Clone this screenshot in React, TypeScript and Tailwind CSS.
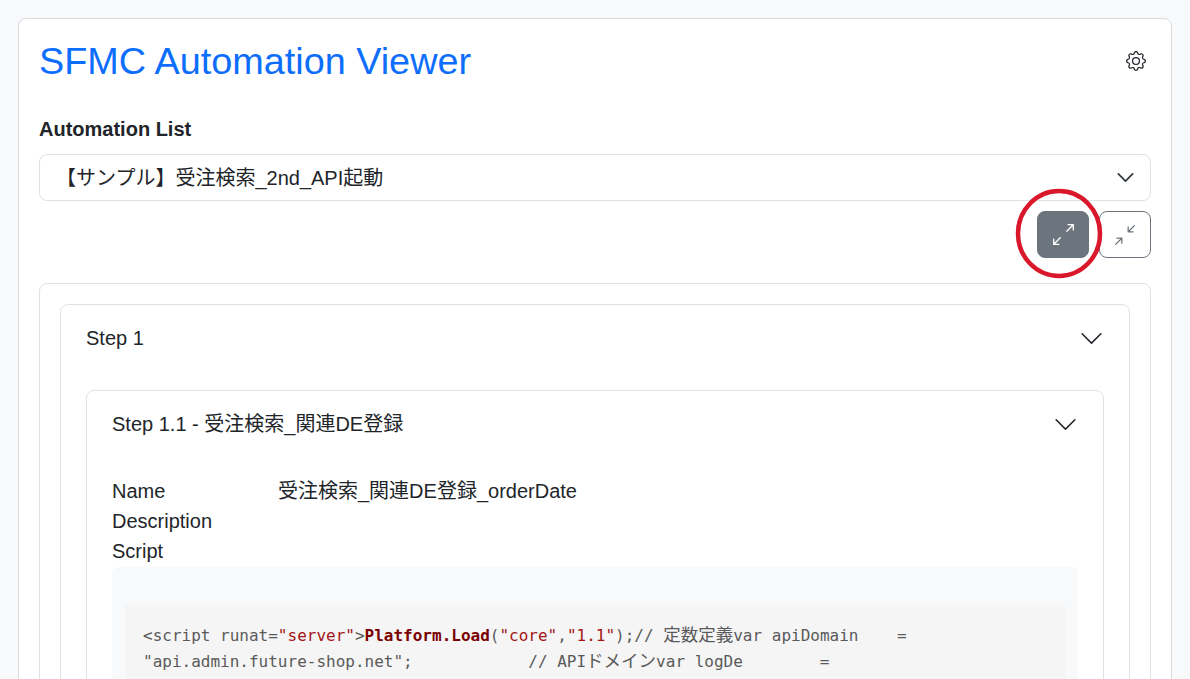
import * as React from 'react'

const Chevron = () => (
  <svg viewBox="0 0 16 16" className="w-[25px] h-[25px] shrink-0" fill="#212529">
    <path fillRule="evenodd" d="M1.646 4.646a.5.5 0 0 1 .708 0L8 10.293l5.646-5.647a.5.5 0 0 1 .708.708l-6 6a.5.5 0 0 1-.708 0l-6-6a.5.5 0 0 1 0-.708z" />
  </svg>
)

const Expand = () => (
  <svg viewBox="0 0 16 16" className="w-[21px] h-[21px]" fill="currentColor">
    <path fillRule="evenodd" d="M5.828 10.172a.5.5 0 0 0-.707 0l-4.096 4.096V11.5a.5.5 0 0 0-1 0v3.975a.5.5 0 0 0 .5.5H4.5a.5.5 0 0 0 0-1H1.732l4.096-4.096a.5.5 0 0 0 0-.707zm4.344-4.344a.5.5 0 0 0 .707 0l4.096-4.096V4.5a.5.5 0 1 0 1 0V.525a.5.5 0 0 0-.5-.5H11.5a.5.5 0 0 0 0 1h2.768l-4.096 4.096a.5.5 0 0 0 0 .707z" />
  </svg>
)

const Contract = () => (
  <svg viewBox="0 0 16 16" className="w-5 h-5" fill="currentColor">
    <path fillRule="evenodd" d="M.172 15.828a.5.5 0 0 0 .707 0l4.096-4.096V14.5a.5.5 0 1 0 1 0v-3.975a.5.5 0 0 0-.5-.5H1.5a.5.5 0 0 0 0 1h2.768L.172 15.121a.5.5 0 0 0 0 .707zM15.828.172a.5.5 0 0 0-.707 0l-4.096 4.096V1.5a.5.5 0 1 0-1 0v3.975a.5.5 0 0 0 .5.5H14.5a.5.5 0 0 0 0-1h-2.768L15.828.879a.5.5 0 0 0 0-.707z" />
  </svg>
)

const Gear = () => (
  <svg viewBox="0 0 16 16" className="w-5 h-5" fill="#212529">
    <path d="M8 4.754a3.246 3.246 0 1 0 0 6.492 3.246 3.246 0 0 0 0-6.492zM5.754 8a2.246 2.246 0 1 1 4.492 0 2.246 2.246 0 0 1-4.492 0z" />
    <path d="M9.796 1.343c-.527-1.79-3.065-1.79-3.592 0l-.094.319a.873.873 0 0 1-1.255.52l-.292-.16c-1.64-.892-3.433.902-2.54 2.541l.159.292a.873.873 0 0 1-.52 1.255l-.319.094c-1.79.527-1.79 3.065 0 3.592l.319.094a.873.873 0 0 1 .52 1.255l-.16.292c-.892 1.64.901 3.434 2.541 2.54l.292-.159a.873.873 0 0 1 1.255.52l.094.319c.527 1.79 3.065 1.79 3.592 0l.094-.319a.873.873 0 0 1 1.255-.52l.292.16c1.64.893 3.434-.902 2.54-2.541l-.159-.292a.873.873 0 0 1 .52-1.255l.319-.094c1.79-.527 1.79-3.065 0-3.592l-.319-.094a.873.873 0 0 1-.52-1.255l.16-.292c.893-1.64-.902-3.433-2.541-2.54l-.292.159a.873.873 0 0 1-1.255-.52l-.094-.319zm-2.633.283c.246-.835 1.428-.835 1.674 0l.094.319a1.873 1.873 0 0 0 2.693 1.115l.291-.16c.764-.415 1.6.42 1.184 1.185l-.159.292a1.873 1.873 0 0 0 1.116 2.692l.318.094c.835.246.835 1.428 0 1.674l-.319.094a1.873 1.873 0 0 0-1.115 2.693l.16.291c.415.764-.42 1.6-1.185 1.184l-.291-.159a1.873 1.873 0 0 0-2.693 1.116l-.094.318c-.246.835-1.428.835-1.674 0l-.094-.319a1.873 1.873 0 0 0-2.692-1.115l-.292.16c-.764.415-1.6-.42-1.184-1.185l.159-.291A1.873 1.873 0 0 0 1.945 8.93l-.319-.094c-.835-.246-.835-1.428 0-1.674l.319-.094A1.873 1.873 0 0 0 3.06 4.377l-.16-.292c-.415-.764.42-1.6 1.185-1.184l.292.159a1.873 1.873 0 0 0 2.692-1.115l.094-.319z" />
  </svg>
)

const Jp = ({ children }: { children: React.ReactNode }) => (
  <span className="font-['Noto_Sans_CJK_JP'] text-[17.5px] leading-[0]">{children}</span>
)

export default function App() {
  return (
    <div className="relative h-[679px] overflow-hidden bg-[#f8f9fa] pt-[18px] pl-[18px] pr-[18px] font-['Liberation_Sans','Noto_Sans_CJK_JP',sans-serif] text-[20px] leading-[30px] text-[#212529]">
      <div className="bg-white border border-[#d9dbde] rounded-[8px] px-5 pt-5 min-h-[700px]">
        <div className="flex items-center justify-between h-[44px]">
          <h1 className="text-[37.8px] leading-[44px] text-[#0d6efd]">SFMC Automation Viewer</h1>
          <div className="pr-[5px]">
            <Gear />
          </div>
        </div>

        <div className="mt-[31px] font-bold">Automation List</div>
        <div className="mt-[10px] h-[47px] border border-[#dee2e6] rounded-[8px] flex items-center justify-between pl-4 pr-[15px]">
          <span>【サンプル】受注検索_2nd_API起動</span>
          <svg viewBox="0 0 16 16" className="w-[19px] h-[19px]" fill="none" stroke="#343a40" strokeWidth="1.5" strokeLinecap="round" strokeLinejoin="round">
            <path d="m2 5 6 6 6-6" />
          </svg>
        </div>

        <div className="mt-[10px] flex justify-end gap-[10px]">
          <div className="w-[52px] h-[47px] rounded-[8px] bg-[#6c757d] border border-[#6c757d] text-white flex items-center justify-center">
            <Expand />
          </div>
          <div className="w-[52px] h-[47px] rounded-[8px] border border-[#6c757d] text-[#6c757d] flex items-center justify-center">
            <Contract />
          </div>
        </div>

        <div className="mt-[25px] border border-[#dee2e6] rounded-[8px] p-5">
          <div className="border border-[#dee2e6] rounded-[8px] px-[25px]">
            <div className="h-[66px] flex items-center justify-between">
              <span>Step 1</span>
              <Chevron />
            </div>
            <div className="mt-[19px] border border-[#dee2e6] rounded-[8px] px-[25px]">
              <div className="h-[66px] flex items-center justify-between">
                <span>Step 1.1 - 受注検索_関連DE登録</span>
                <Chevron />
              </div>
              <div className="mt-[19px]">
                <div className="flex">
                  <span className="w-[166px] shrink-0">Name</span>
                  <span>受注検索_関連DE登録_orderDate</span>
                </div>
                <div>Description</div>
                <div>Script</div>
                <div className="mt-px bg-[#f8f9fa] rounded-[6px] pl-[13px] pr-3 pt-[38px]">
                  <div className="bg-[#f5f5f5] pl-[18px] pt-[18px] pb-8 font-['DejaVu_Sans_Mono','Noto_Sans_CJK_JP',monospace] text-[16px] leading-[26px] text-[#5a5a5a] whitespace-pre">
                    <div>
                      {'<script runat='}
                      <span className="text-[#a31515]">"server"</span>
                      {'>'}
                      <b className="text-[#7a0000]">Platform.Load</b>
                      {'('}
                      <span className="text-[#a31515]">"core"</span>
                      {','}
                      <span className="text-[#a31515]">"1.1"</span>
                      {');// '}
                      <Jp>定数定義</Jp>
                      {'var apiDomain    ='}
                    </div>
                    <div>
                      {'"api.admin.future-shop.net";            // API'}
                      <Jp>ドメイン</Jp>
                      {'var logDe        ='}
                    </div>
                  </div>
                </div>
              </div>
            </div>
          </div>
        </div>
      </div>

      <svg viewBox="0 0 90 94" className="absolute left-[1014px] top-[186px] w-[90px] h-[94px]" fill="none" stroke="#d9192b" strokeWidth="4.5">
        <ellipse cx="45" cy="47.5" rx="41" ry="42.5" />
      </svg>
    </div>
  )
}
